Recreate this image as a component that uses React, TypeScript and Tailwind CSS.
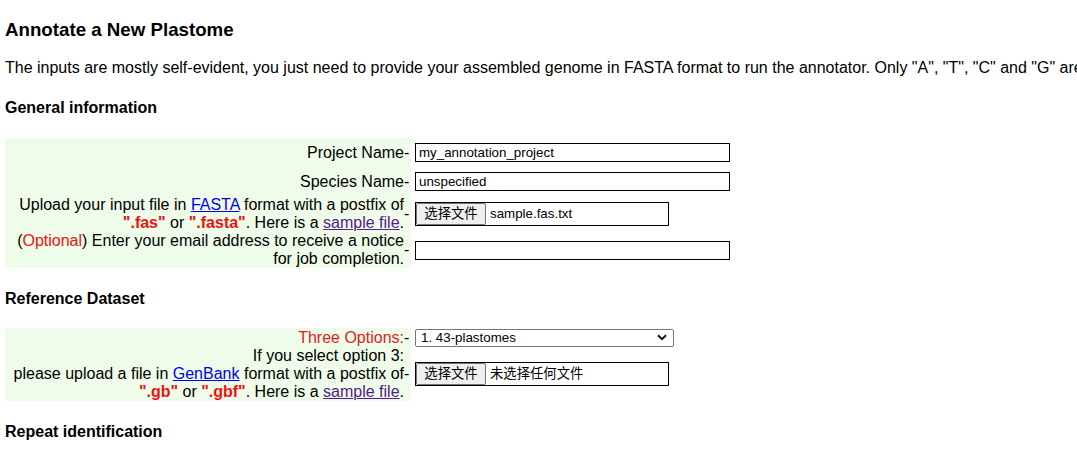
const FONT = "font-['Liberation_Sans',Arial,'Noto_Sans_CJK_SC',sans-serif]";

function TextBox({ value }: { value: string }) {
  return (
    <input
      readOnly
      defaultValue={value}
      className="w-[315px] h-[19px] border border-black bg-white px-[3px] text-[13.33px] leading-[17px] text-black outline-none"
    />
  );
}

function FileBox({ name }: { name: string }) {
  return (
    <div className="flex items-center w-[254px] h-[24px] border border-black bg-white text-[13.33px]">
      <span className="flex items-center justify-center w-[70px] h-[22px] bg-[#efefef] border border-[#767676] rounded-[2px] text-black">
        选择文件
      </span>
      <span className="ml-[4px] text-black">{name}</span>
    </div>
  );
}

function Row({ h, label, children }: { h: string; label: React.ReactNode; children: React.ReactNode }) {
  return (
    <div className={`flex items-stretch ${h}`}>
      <div className="flex items-center bg-[#effce9]">
        <div className="w-[399px] text-right leading-[18px]">{label}</div>
        <div className="w-[7px] leading-[18px]">-</div>
      </div>
      <div className="flex items-center pl-[4px]">{children}</div>
    </div>
  );
}

const Red = ({ children }: { children: React.ReactNode }) => (
  <span className="font-bold text-[#ee1111]">{children}</span>
);

export default function App() {
  return (
    <div className={`w-[1077px] h-[457px] overflow-hidden bg-white text-black ${FONT}`}>
      <div className="pl-[5px] pt-[19px]">
        <h3 className="text-[18.72px] leading-[22px] font-bold">Annotate a New Plastome</h3>
        <p className="mt-[18px] text-[16px] leading-[18px] whitespace-nowrap">
          The inputs are mostly self-evident, you just need to provide your assembled genome in FASTA format to run the
          annotator. Only "A", "T", "C" and "G" are allowed in the sequence.
        </p>

        <h4 className="mt-[22px] text-[16px] leading-[18px] font-bold">General information</h4>

        <div className="mt-[21px] text-[16px]">
          <Row h="h-[29px]" label="Project Name">
            <TextBox value="my_annotation_project" />
          </Row>
          <Row h="h-[29px]" label="Species Name">
            <TextBox value="unspecified" />
          </Row>
          <Row
            h="h-[36px]"
            label={
              <>
                Upload your input file in{' '}
                <a href="#" className="text-[#0000ee] underline">FASTA</a> format with a postfix of
                <br />
                <Red>".fas"</Red> or <Red>".fasta"</Red>. Here is a{' '}
                <a href="#" className="text-[#551a8b] underline">sample file</a>.
              </>
            }
          >
            <FileBox name="sample.fas.txt" />
          </Row>
          <Row
            h="h-[36px]"
            label={
              <>
                (<span className="text-[#ee1111]">Optional</span>) Enter your email address to receive a notice
                <br />
                for job completion.
              </>
            }
          >
            <TextBox value="" />
          </Row>
        </div>

        <h4 className="mt-[22px] text-[16px] leading-[18px] font-bold">Reference Dataset</h4>

        <div className="mt-[20px] text-[16px]">
          <Row h="h-[19px]" label={<span className="text-[#e21b24]">Three Options:</span>}>
            <div className="flex items-center justify-between w-[259px] h-[18px] border border-[#767676] rounded-[2px] bg-white pl-[5px] pr-[6px] text-[13.33px]">
              <span>1. 43-plastomes</span>
              <svg width="10" height="7" viewBox="0 0 10 7" fill="none">
                <path d="M1 1.2 L5 5.2 L9 1.2" stroke="#111" strokeWidth="2" />
              </svg>
            </div>
          </Row>
          <Row
            h="h-[54px]"
            label={
              <>
                If you select option 3:
                <br />
                please upload a file in <a href="#" className="text-[#0000ee] underline">GenBank</a> format with a
                postfix of
                <br />
                <Red>".gb"</Red> or <Red>".gbf"</Red>. Here is a{' '}
                <a href="#" className="text-[#551a8b] underline">sample file</a>.
              </>
            }
          >
            <FileBox name="未选择任何文件" />
          </Row>
        </div>

        <h4 className="mt-[22px] text-[16px] leading-[18px] font-bold">Repeat identification</h4>
      </div>
    </div>
  );
}
